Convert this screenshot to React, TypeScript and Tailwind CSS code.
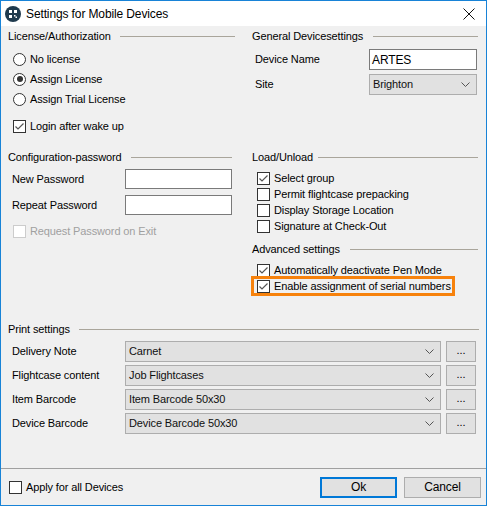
import React from "react";

const GroupHeader = ({ title, gap = "ml-[9px]" }: { title: string; gap?: string }) => (
  <div className="flex items-center h-[14px]">
    <span className="whitespace-nowrap">{title}</span>
    <div className={`flex-1 h-px bg-[#a9a59b] ${gap}`} />
  </div>
);

const CheckBox = ({ checked = false, disabled = false }: { checked?: boolean; disabled?: boolean }) => (
  <span
    className={`w-[13px] h-[13px] shrink-0 border bg-white flex items-center justify-center ${
      disabled ? "border-[#cccccc]" : "border-[#333333]"
    }`}
  >
    {checked && (
      <svg width="11" height="11" viewBox="0 0 11 11">
        <path d="M1.5 5.5 L4 8 L9.5 2.5" fill="none" stroke="#555555" strokeWidth="1.2" />
      </svg>
    )}
  </span>
);

const CheckRow = ({
  label,
  checked,
  disabled,
  className = "h-[16px]",
}: {
  label: string;
  checked?: boolean;
  disabled?: boolean;
  className?: string;
}) => (
  <div className={`flex items-center gap-[4px] ${className}`}>
    <CheckBox checked={checked} disabled={disabled} />
    <span className={`whitespace-nowrap ${disabled ? "text-[#a0a0a0]" : ""}`}>{label}</span>
  </div>
);

const Radio = ({ label, checked }: { label: string; checked?: boolean }) => (
  <div className="flex items-center gap-[4px] h-[20px]">
    <span className="w-[13px] h-[13px] rounded-full border border-[#333333] bg-white flex items-center justify-center">
      {checked && <span className="w-[6px] h-[6px] rounded-full bg-[#333333]" />}
    </span>
    <span>{label}</span>
  </div>
);

const Chevron = () => (
  <svg width="9" height="6" viewBox="0 0 9 6">
    <path d="M0.5 0.5 L4.5 4.5 L8.5 0.5" fill="none" stroke="#555555" strokeWidth="1" />
  </svg>
);

const Select = ({ value, className }: { value: string; className: string }) => (
  <div
    className={`flex items-center justify-between border border-[#adadad] bg-[#e1e1e1] pl-[3px] pr-[6px] ${className}`}
  >
    <span className="text-[#101010]">{value}</span>
    <Chevron />
  </div>
);

const PrintRow = ({ label, value }: { label: string; value: string }) => (
  <div className="flex items-center h-[21px]">
    <span className="w-[117px] pl-[4px]">{label}</span>
    <Select value={value} className="w-[316px] h-[21px]" />
    <div className="ml-[5px] w-[30px] h-[21px] border border-[#adadad] bg-[#e1e1e1] flex items-center justify-center pb-[2px]">
      ...
    </div>
  </div>
);

export default function App() {
  return (
    <div
      className="w-[487px] h-[506px] border border-[#1883d7] bg-[#f0f0f0] flex flex-col text-[11px] tracking-[-0.12px] text-black"
      style={{ fontFamily: '"Liberation Sans", Arial, sans-serif' }}
    >
      {/* title bar */}
      <div className="h-[25px] bg-white flex items-center shrink-0">
        <div className="ml-[4px] w-[16px] h-[16px] rounded-full bg-[#1f3a4d] flex items-center justify-center">
          <svg width="10" height="10" viewBox="0 0 10 10">
            <rect x="1" y="1" width="3" height="3" fill="#ffffff" />
            <rect x="6" y="1" width="3" height="3" fill="#ffffff" />
            <rect x="1" y="6" width="3" height="3" fill="#ffffff" />
            <rect x="6" y="6" width="1.5" height="1.5" fill="#ffffff" />
            <rect x="7.5" y="7.5" width="1.5" height="1.5" fill="#ffffff" />
          </svg>
        </div>
        <span className="ml-[5px] text-[12px]">Settings for Mobile Devices</span>
        <svg className="ml-auto mr-[11px]" width="12" height="12" viewBox="0 0 12 12">
          <path d="M0.5 0.5 L11.5 11.5 M11.5 0.5 L0.5 11.5" stroke="#111111" strokeWidth="1" />
        </svg>
      </div>

      <div className="flex-1 px-[7px]">
        {/* section 1 */}
        <div className="h-[124px] grid grid-cols-[227px_226px] gap-x-[17px] pt-[3px]">
          <div>
            <GroupHeader title="License/Authorization" />
            <div className="pl-[5px] mt-[6px]">
              <Radio label="No license" />
              <Radio label="Assign License" checked />
              <Radio label="Assign Trial License" />
              <CheckRow label="Login after wake up" checked className="h-[20px] mt-[7px]" />
            </div>
          </div>
          <div>
            <GroupHeader title="General Devicesettings" gap="ml-[10px]" />
            <div className="flex items-center mt-[6px] h-[21px]">
              <span className="w-[117px] pl-[3px]">Device Name</span>
              <div className="w-[108px] h-[21px] border border-[#7a7a7a] bg-white flex items-center pl-[2px] text-[12px]">
                ARTES
              </div>
            </div>
            <div className="flex items-center mt-[4px] h-[21px]">
              <span className="w-[117px] pl-[3px]">Site</span>
              <Select value="Brighton" className="w-[108px] h-[21px]" />
            </div>
          </div>
        </div>

        {/* section 2 */}
        <div className="h-[172px] grid grid-cols-[227px_226px] gap-x-[17px]">
          <div>
            <div className="w-[224px]">
              <GroupHeader title="Configuration-password" />
            </div>
            <div className="flex items-center mt-[5px] h-[20px]">
              <span className="w-[117px] pl-[4px]">New Password</span>
              <div className="w-[107px] h-[20px] border border-[#7a7a7a] bg-white" />
            </div>
            <div className="flex items-center mt-[6px] h-[20px]">
              <span className="w-[117px] pl-[4px]">Repeat Password</span>
              <div className="w-[107px] h-[20px] border border-[#7a7a7a] bg-white" />
            </div>
            <div className="pl-[5px] mt-[9px]">
              <CheckRow label="Request Password on Exit" disabled className="h-[14px]" />
            </div>
          </div>
          <div>
            <GroupHeader title="Load/Unload" gap="ml-[5px]" />
            <div className="pl-[5px] mt-[6px]">
              <CheckRow label="Select group" checked />
              <CheckRow label="Permit flightcase prepacking" />
              <CheckRow label="Display Storage Location" />
              <CheckRow label="Signature at Check-Out" />
            </div>
            <div className="mt-[8px]">
              <GroupHeader title="Advanced settings" gap="ml-[10px]" />
            </div>
            <div className="pl-[5px] mt-[6px]">
              <CheckRow label="Automatically deactivate Pen Mode" checked />
              <div className="relative">
                <CheckRow label="Enable assignment of serial numbers" checked />
                <div className="absolute left-[-6px] top-[-2px] w-[204px] h-[20px] border-[3px] border-[#f7820c]" />
              </div>
            </div>
          </div>
        </div>

        {/* print settings */}
        <GroupHeader title="Print settings" />
        <div className="mt-[5px] flex flex-col gap-[3px]">
          <PrintRow label="Delivery Note" value="Carnet" />
          <PrintRow label="Flightcase content" value="Job Flightcases" />
          <PrintRow label="Item Barcode" value="Item Barcode 50x30" />
          <PrintRow label="Device Barcode" value="Device Barcode 50x30" />
        </div>
      </div>

      {/* footer */}
      <div className="h-[37px] shrink-0 border-t border-[#a0a0a0] flex items-center pl-[8px] pr-[5px]">
        <CheckRow label="Apply for all Devices" className="h-[14px]" />
        <div className="ml-auto w-[77px] h-[21px] border-2 border-[#0078d7] bg-[#e1e1e1] flex items-center justify-center text-[12px]">
          Ok
        </div>
        <div className="ml-[7px] w-[77px] h-[21px] border border-[#adadad] bg-[#e1e1e1] flex items-center justify-center text-[12px]">
          Cancel
        </div>
      </div>
    </div>
  );
}
